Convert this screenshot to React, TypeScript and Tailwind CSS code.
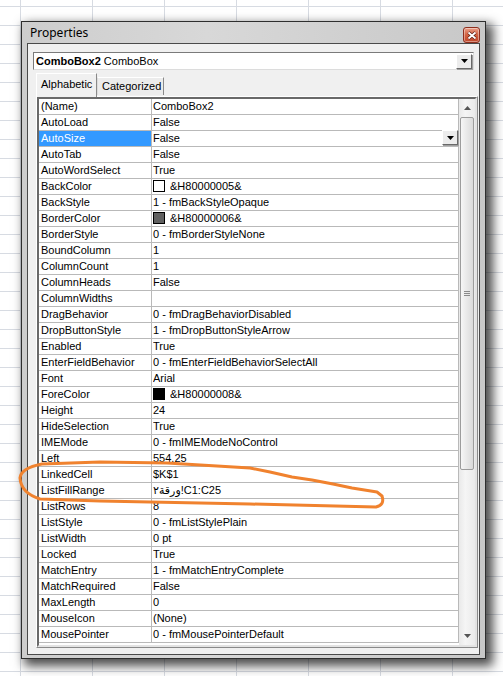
type Row = { name: string; value: string; swatch?: string; selected?: boolean }

const rows: Row[] = [
  { name: '(Name)', value: 'ComboBox2' },
  { name: 'AutoLoad', value: 'False' },
  { name: 'AutoSize', value: 'False', selected: true },
  { name: 'AutoTab', value: 'False' },
  { name: 'AutoWordSelect', value: 'True' },
  { name: 'BackColor', value: '&H80000005&', swatch: 'bg-white' },
  { name: 'BackStyle', value: '1 - fmBackStyleOpaque' },
  { name: 'BorderColor', value: '&H80000006&', swatch: 'bg-[#606060]' },
  { name: 'BorderStyle', value: '0 - fmBorderStyleNone' },
  { name: 'BoundColumn', value: '1' },
  { name: 'ColumnCount', value: '1' },
  { name: 'ColumnHeads', value: 'False' },
  { name: 'ColumnWidths', value: '' },
  { name: 'DragBehavior', value: '0 - fmDragBehaviorDisabled' },
  { name: 'DropButtonStyle', value: '1 - fmDropButtonStyleArrow' },
  { name: 'Enabled', value: 'True' },
  { name: 'EnterFieldBehavior', value: '0 - fmEnterFieldBehaviorSelectAll' },
  { name: 'Font', value: 'Arial' },
  { name: 'ForeColor', value: '&H80000008&', swatch: 'bg-black' },
  { name: 'Height', value: '24' },
  { name: 'HideSelection', value: 'True' },
  { name: 'IMEMode', value: '0 - fmIMEModeNoControl' },
  { name: 'Left', value: '554.25' },
  { name: 'LinkedCell', value: '$K$1' },
  { name: 'ListFillRange', value: 'ورقة٢!C1:C25' },
  { name: 'ListRows', value: '8' },
  { name: 'ListStyle', value: '0 - fmListStylePlain' },
  { name: 'ListWidth', value: '0 pt' },
  { name: 'Locked', value: 'True' },
  { name: 'MatchEntry', value: '1 - fmMatchEntryComplete' },
  { name: 'MatchRequired', value: 'False' },
  { name: 'MaxLength', value: '0' },
  { name: 'MouseIcon', value: '(None)' },
  { name: 'MousePointer', value: '0 - fmMousePointerDefault' },
]

function DropButton() {
  return (
    <div className="flex h-[15px] w-[16px] items-center justify-center border border-t-white border-l-white border-r-[#696969] border-b-[#696969] bg-[#ececec] shadow-[1px_1px_0_#a0a0a0]">
      <svg width="7" height="4" viewBox="0 0 7 4">
        <path d="M0 0h7L3.5 4z" fill="#000" />
      </svg>
    </div>
  )
}

function CloseButton() {
  return (
    <div className="flex h-[16px] w-[17px] items-center justify-center rounded-[3px] border border-[#8e2f1e] bg-[linear-gradient(to_bottom,#eca08a,#d2603f_50%,#c0462a)] shadow-[inset_0_0_0_1px_rgba(255,255,255,0.4)]">
      <svg width="10" height="9" viewBox="0 0 10 9">
        <path d="M1.5 1.5l7 6M8.5 1.5l-7 6" stroke="#5a1a10" strokeWidth="3.2" />
        <path d="M1.5 1.5l7 6M8.5 1.5l-7 6" stroke="#fff" strokeWidth="1.8" />
      </svg>
    </div>
  )
}

function PropRow({ row }: { row: Row }) {
  return (
    <div className="flex h-[16px] border-b border-[#b9b9b9] leading-[15px]">
      <div
        className={
          row.selected
            ? 'w-[113px] shrink-0 truncate border-r border-[#b9b9b9] bg-[#3399ff] pl-[2px] text-white'
            : 'w-[113px] shrink-0 truncate border-r border-[#b9b9b9] pl-[2px]'
        }
      >
        {row.name}
      </div>
      <div className="flex min-w-0 flex-1 items-start pl-[1px]">
        {row.swatch && (
          <span className={`mt-[1px] mr-[5px] h-[12px] w-[12px] shrink-0 border border-black ${row.swatch}`} />
        )}
        <span className="flex-1 truncate whitespace-nowrap">{row.value}</span>
        {row.selected && (
          <div className="-mt-px">
            <DropButton />
          </div>
        )}
      </div>
    </div>
  )
}

export default function App() {
  return (
    <div className="relative h-[676px] w-[503px] overflow-hidden bg-white font-['Liberation_Sans','DejaVu_Sans',Arial,sans-serif] text-[11px] text-black [background-image:linear-gradient(#d7dbe2_1px,transparent_1px),linear-gradient(90deg,#d7dbe2_1px,transparent_1px)] [background-position:20px_6px] [background-size:72px_19px]">
      {/* floating Properties window */}
      <div className="absolute left-[21px] top-[21px] flex h-[638px] w-[465px] flex-col border border-[#2e2e2e] bg-[linear-gradient(to_right,#cdcdcd,#d8d8d8_40%,#c8c8c8)] shadow-[5px_5px_10px_2px_rgba(0,0,0,0.7)]">
        <div className="flex h-[21px] shrink-0 items-end justify-between pl-[8px] pr-[5px]">
          <span className="self-center font-['Noto_Sans',sans-serif] text-[12px] leading-none text-black">Properties</span>
          <CloseButton />
        </div>

        <div className="mx-[5px] mb-[3px] flex flex-1 flex-col border border-[#4a4a4a] bg-[#f0f0f0]">
          {/* object combo */}
          <div className="mx-[5px] mt-[8px] flex h-[18px] shrink-0 items-center border border-t-[#7a7a7a] border-l-[#7a7a7a] border-r-[#dcdcdc] border-b-[#dcdcdc] bg-white pl-[2px] pr-[1px]">
            <span className="flex-1 whitespace-nowrap">
              <b>ComboBox2</b> ComboBox
            </span>
            <DropButton />
          </div>

          {/* tabs */}
          <div className="mt-[3px] ml-[8px] flex h-[23px] shrink-0 items-end leading-[13px]">
            <div className="relative z-10 -mb-px flex h-[24px] w-[61px] items-start border border-b-0 border-t-white border-l-white border-r-[#8a8a8a] bg-[#f0f0f0] pt-[4px] pl-[4px]">
              Alphabetic
            </div>
            <div className="mb-[1px] flex h-[18px] w-[67px] items-start border border-b-0 border-t-white border-l-[#dcdcdc] border-r-[#8a8a8a] bg-[#ececec] pt-[2px] pl-[4px]">
              Categorized
            </div>
          </div>

          {/* property grid */}
          <div className="mr-px mb-[6px] ml-[8px] flex flex-1 border-t border-l border-t-white border-l-white border-r border-b border-r-[#8a8a8a] border-b-[#8a8a8a]">
            <div className="flex flex-1 border-2 border-t-[#696969] border-l-[#696969] border-r-[#e3e3e3] border-b-[#e3e3e3] bg-white">
              <div className="flex min-w-0 flex-1 flex-col">
                <div className="flex flex-col border-r border-[#b9b9b9]">
                  {rows.map((r) => (
                    <PropRow key={r.name} row={r} />
                  ))}
                </div>
              </div>

              {/* scrollbar */}
              <div className="flex w-[16px] shrink-0 flex-col items-center bg-[linear-gradient(to_right,#e9e9e9,#f5f5f5_40%,#eaeaea)]">
                <div className="flex h-[18px] items-center justify-center">
                  <svg width="7" height="4" viewBox="0 0 7 4">
                    <path d="M3.5 0L7 4H0z" fill="#555" />
                  </svg>
                </div>
                <div className="flex h-[353px] w-[14px] items-center justify-center rounded-[2px] border border-[#9c9c9c] bg-[linear-gradient(to_right,#f6f6f6,#e8e8e8_50%,#dadada)]">
                  <div className="flex flex-col gap-[1px]">
                    <span className="h-px w-[6px] bg-[#8a8a8a]" />
                    <span className="h-px w-[6px] bg-[#8a8a8a]" />
                    <span className="h-px w-[6px] bg-[#8a8a8a]" />
                  </div>
                </div>
                <div className="flex-1" />
                <div className="flex h-[18px] items-center justify-center">
                  <svg width="7" height="4" viewBox="0 0 7 4">
                    <path d="M0 0h7L3.5 4z" fill="#555" />
                  </svg>
                </div>
              </div>
            </div>
          </div>
        </div>
      </div>

      {/* hand-drawn highlight */}
      <svg className="pointer-events-none absolute inset-0" width="503" height="676" viewBox="0 0 503 676">
        <path
          d="M382 496 L377 492 L352 488 L333 484 L312 480 L292 477 L270 472 L250 468 L217 466 L167 463 L100 462 L42 464 Q21 468 20 478 Q21 493 40 499 L100 501 L250 504 L376 507 Q385 505 382 496"
          fill="none"
          stroke="#f0822e"
          strokeWidth="3"
          strokeLinejoin="round"
          strokeLinecap="round"
        />
      </svg>
    </div>
  )
}
